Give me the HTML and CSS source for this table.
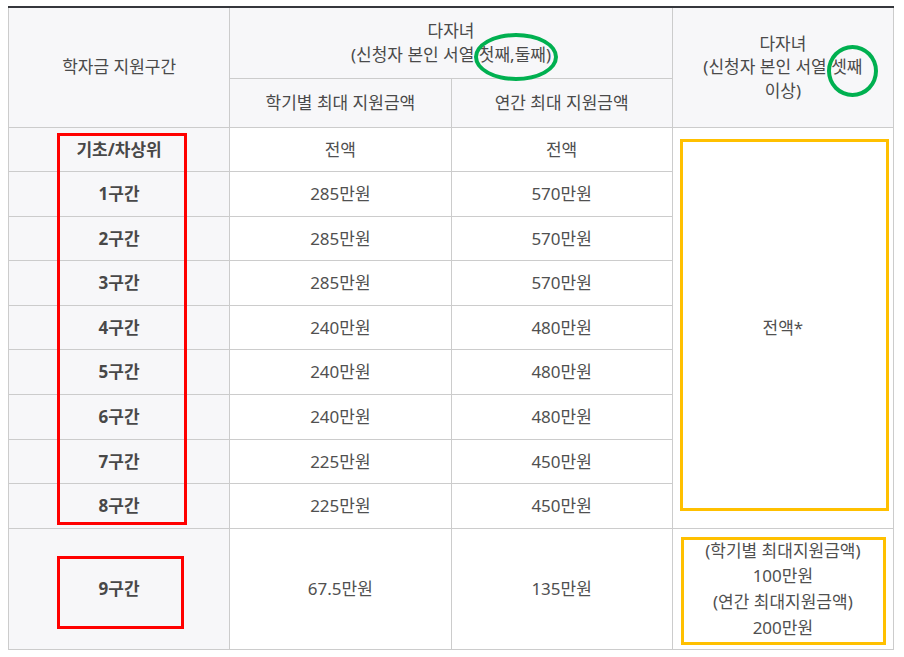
FILE: index.html
```html
<!DOCTYPE html>
<html lang="ko">
<head>
<meta charset="utf-8">
<link rel="stylesheet" href="styles.css">
</head>
<body>
<div class="wrap">
  <table class="grid">
    <thead>
      <tr class="hr1">
        <th rowspan="2">학자금 지원구간</th>
        <th colspan="2">다자녀<br>(신청자 본인 서열 첫째,둘째)</th>
        <th rowspan="2" class="c4">다자녀<br>(신청자 본인 서열 셋째<br>이상)</th>
      </tr>
      <tr class="hr2">
        <th>학기별 최대 지원금액</th>
        <th>연간 최대 지원금액</th>
      </tr>
    </thead>
    <tbody>
      <tr><th class="lab">기초/차상위</th><td>전액</td><td>전액</td><td rowspan="9">전액*</td></tr>
      <tr><th class="lab">1구간</th><td>285만원</td><td>570만원</td></tr>
      <tr><th class="lab">2구간</th><td>285만원</td><td>570만원</td></tr>
      <tr><th class="lab">3구간</th><td>285만원</td><td>570만원</td></tr>
      <tr><th class="lab">4구간</th><td>240만원</td><td>480만원</td></tr>
      <tr><th class="lab">5구간</th><td>240만원</td><td>480만원</td></tr>
      <tr><th class="lab">6구간</th><td>240만원</td><td>480만원</td></tr>
      <tr><th class="lab">7구간</th><td>225만원</td><td>450만원</td></tr>
      <tr><th class="lab">8구간</th><td>225만원</td><td>450만원</td></tr>
      <tr><th class="lab">9구간</th><td>67.5만원</td><td>135만원</td><td>(학기별 최대지원금액)<br>100만원<br>(연간 최대지원금액)<br>200만원</td></tr>
    </tbody>
  </table>
  <div class="mark red r1"></div>
  <div class="mark red r2"></div>
  <div class="mark yel y1"></div>
  <div class="mark yel y2"></div>
  <div class="mark grn g1"></div>
  <div class="mark grn g2"></div>
</div>
</body>
</html>
```

FILE: styles.css
```css
html, body {
  background: #ffffff;
}
body {
  margin: 6px 8px 0;
  font-family: "Noto Sans", "Noto Sans CJK KR", sans-serif;
  font-size: 17px;
  color: #505050;
}
.wrap {
  position: relative;
  width: 886px;
}
.grid {
  width: 886px;
  table-layout: fixed;
  border-collapse: collapse;
  border-top: 2px solid #35373c;
}
.grid th, .grid td {
  border: 1px solid #cccccc;
  text-align: center;
  vertical-align: middle;
  font-weight: normal;
  line-height: 25.6px;
  padding: 9px 6px;
}
.grid thead th {
  background: #f7f7f9;
  line-height: 23.5px;
  color: #4a4a4a;
}
.grid .hr1 th {
  padding: 11px 4px 12px;
}
.grid .hr2 th {
  padding: 12px 4px 12px;
}
.grid th.lab {
  background: #f7f7f9;
  font-weight: bold;
  color: #484848;
}
.mark {
  position: absolute;
  box-sizing: border-box;
}
.red { border: 3px solid #ff0000; }
.yel { border: 3px solid #ffc000; }
.grn { border: 4px solid #00b050; border-radius: 50%; }
.r1 { left: 49px; top: 127px; width: 130px; height: 392px; }
.r2 { left: 49px; top: 550px; width: 127px; height: 73px; }
.y1 { left: 672px; top: 133px; width: 209px; height: 372px; }
.y2 { left: 673px; top: 531px; width: 205px; height: 108px; }
.g1 { left: 466px; top: 27px; width: 84px; height: 48px; }
.g2 { left: 819px; top: 39px; width: 51px; height: 52px; }
```
